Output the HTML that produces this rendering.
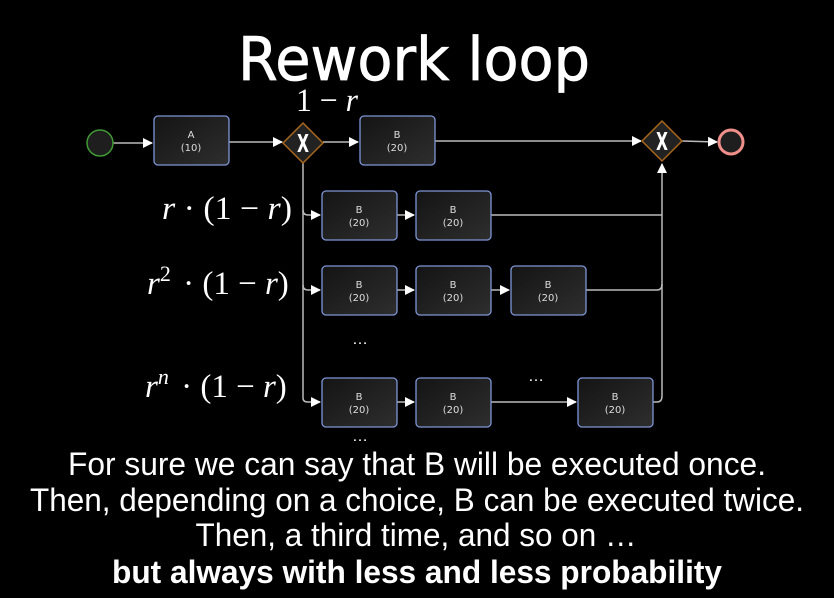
<!DOCTYPE html>
<html><head><style>html,body{margin:0;padding:0;background:#000;width:834px;height:598px;overflow:hidden}</style></head>
<body>
<svg width="834" height="598" viewBox="0 0 834 598" xmlns="http://www.w3.org/2000/svg">
<defs>
<linearGradient id="bx" x1="0" y1="0" x2="1" y2="1"><stop offset="0" stop-color="#141414"/><stop offset="1" stop-color="#2e2e2e"/></linearGradient>
<marker id="ar" markerWidth="10" markerHeight="10" refX="9" refY="5" orient="auto" markerUnits="userSpaceOnUse"><path d="M0,0 L10,5 L0,10 z" fill="#fff"/></marker>
<g id="box"><rect x="0" y="0" width="75" height="49" rx="4" fill="url(#bx)" stroke="#7f96d6" stroke-width="1.3"/></g>
</defs>
<text x="414" y="80" text-anchor="middle" font-family="DejaVu Sans, sans-serif" font-size="60" fill="#fff" stroke="#fff" stroke-width="0.8" textLength="352" lengthAdjust="spacingAndGlyphs">Rework loop</text>

<g stroke="#bbb" stroke-width="1.5" fill="none">
<line x1="113" y1="143" x2="152" y2="143" marker-end="url(#ar)"/>
<line x1="229" y1="142" x2="282" y2="142" marker-end="url(#ar)"/>
<line x1="323" y1="142" x2="358" y2="142" marker-end="url(#ar)"/>
<line x1="435" y1="141" x2="641" y2="141" marker-end="url(#ar)"/>
<line x1="682" y1="141" x2="717" y2="142" marker-end="url(#ar)"/>
<path d="M303 162 V398 Q303 402 308 402 H320" marker-end="url(#ar)"/>
<path d="M303 210 Q303 215 308 215 H320" marker-end="url(#ar)"/>
<path d="M303 285 Q303 290 308 290 H320" marker-end="url(#ar)"/>
<line x1="397" y1="215" x2="414" y2="215" marker-end="url(#ar)"/>
<line x1="397" y1="290" x2="414" y2="290" marker-end="url(#ar)"/>
<line x1="491" y1="290" x2="509" y2="290" marker-end="url(#ar)"/>
<line x1="397" y1="402" x2="414" y2="402" marker-end="url(#ar)"/>
<line x1="491" y1="402" x2="576" y2="402" marker-end="url(#ar)"/>
<line x1="491" y1="215" x2="662" y2="215"/>
<path d="M586 290 H657 Q662 290 662 284"/>
<path d="M653 402 H657 Q662 402 662 396 V164" marker-end="url(#ar)"/>
</g>

<circle cx="100" cy="143" r="13" fill="#1e1e1e" stroke="#3f9a34" stroke-width="1.5"/>
<circle cx="731" cy="142" r="12" fill="#1e1e1e" stroke="#f0908a" stroke-width="3"/>
<g>
<path d="M303 123 L323 143 L303 163 L283 143 Z" fill="#222" stroke="#a8661c" stroke-width="1.5"/>
<text x="303" y="152" text-anchor="middle" font-family="DejaVu Sans, sans-serif" font-weight="bold" font-size="25" fill="#fff" textLength="12" lengthAdjust="spacingAndGlyphs">X</text>
<path d="M662 121 L682 141 L662 161 L642 141 Z" fill="#222" stroke="#a8661c" stroke-width="1.5"/>
<text x="662" y="150" text-anchor="middle" font-family="DejaVu Sans, sans-serif" font-weight="bold" font-size="25" fill="#fff" textLength="12" lengthAdjust="spacingAndGlyphs">X</text>
</g>

<g font-family="DejaVu Sans, sans-serif" font-size="10" fill="#ddd" text-anchor="middle">
<use href="#box" x="154" y="116"/><text x="191" y="138">A</text><text x="191" y="151">(10)</text>
<use href="#box" x="360" y="116"/><text x="397" y="138">B</text><text x="397" y="151">(20)</text>
<use href="#box" x="322" y="191"/><text x="359" y="213">B</text><text x="359" y="226">(20)</text>
<use href="#box" x="416" y="191"/><text x="453" y="213">B</text><text x="453" y="226">(20)</text>
<use href="#box" x="322" y="266"/><text x="359" y="288">B</text><text x="359" y="301">(20)</text>
<use href="#box" x="416" y="266"/><text x="453" y="288">B</text><text x="453" y="301">(20)</text>
<use href="#box" x="511" y="266"/><text x="548" y="288">B</text><text x="548" y="301">(20)</text>
<use href="#box" x="322" y="378"/><text x="359" y="400">B</text><text x="359" y="413">(20)</text>
<use href="#box" x="416" y="378"/><text x="453" y="400">B</text><text x="453" y="413">(20)</text>
<use href="#box" x="578" y="378"/><text x="615" y="400">B</text><text x="615" y="413">(20)</text>
</g>

<g font-family="Liberation Serif, serif" font-size="33" fill="#fff">
<text x="296" y="111" textLength="62" lengthAdjust="spacingAndGlyphs">1 − <tspan font-style="italic">r</tspan></text>
<text x="162" y="219" textLength="130" lengthAdjust="spacingAndGlyphs"><tspan font-style="italic">r</tspan> · (1 − <tspan font-style="italic">r</tspan>)</text>
<text x="147" y="294"><tspan font-style="italic">r</tspan><tspan font-size="22" dy="-13">2</tspan><tspan dy="13" dx="4"> · (1 − </tspan><tspan font-style="italic">r</tspan>)</text>
<text x="145" y="397"><tspan font-style="italic">r</tspan><tspan font-size="22" font-style="italic" dy="-13">n</tspan><tspan dy="13" dx="4"> · (1 − </tspan><tspan font-style="italic">r</tspan>)</text>
</g>
<g font-family="Liberation Sans, sans-serif" font-size="16" fill="#fff" text-anchor="middle">
<text x="360" y="344">…</text>
<text x="536" y="381">…</text>
<text x="360" y="441">…</text>
</g>

<g font-family="Liberation Sans, sans-serif" font-size="32" fill="#fff" text-anchor="middle">
<text x="417" y="475" textLength="698" lengthAdjust="spacingAndGlyphs">For sure we can say that B will be executed once.</text>
<text x="417" y="511" textLength="774" lengthAdjust="spacingAndGlyphs">Then, depending on a choice, B can be executed twice.</text>
<text x="416" y="546" textLength="441" lengthAdjust="spacingAndGlyphs">Then, a third time, and so on …</text>
<text x="417" y="583" font-weight="bold" textLength="610" lengthAdjust="spacingAndGlyphs">but always with less and less probability</text>
</g>
</svg>
</body></html>
